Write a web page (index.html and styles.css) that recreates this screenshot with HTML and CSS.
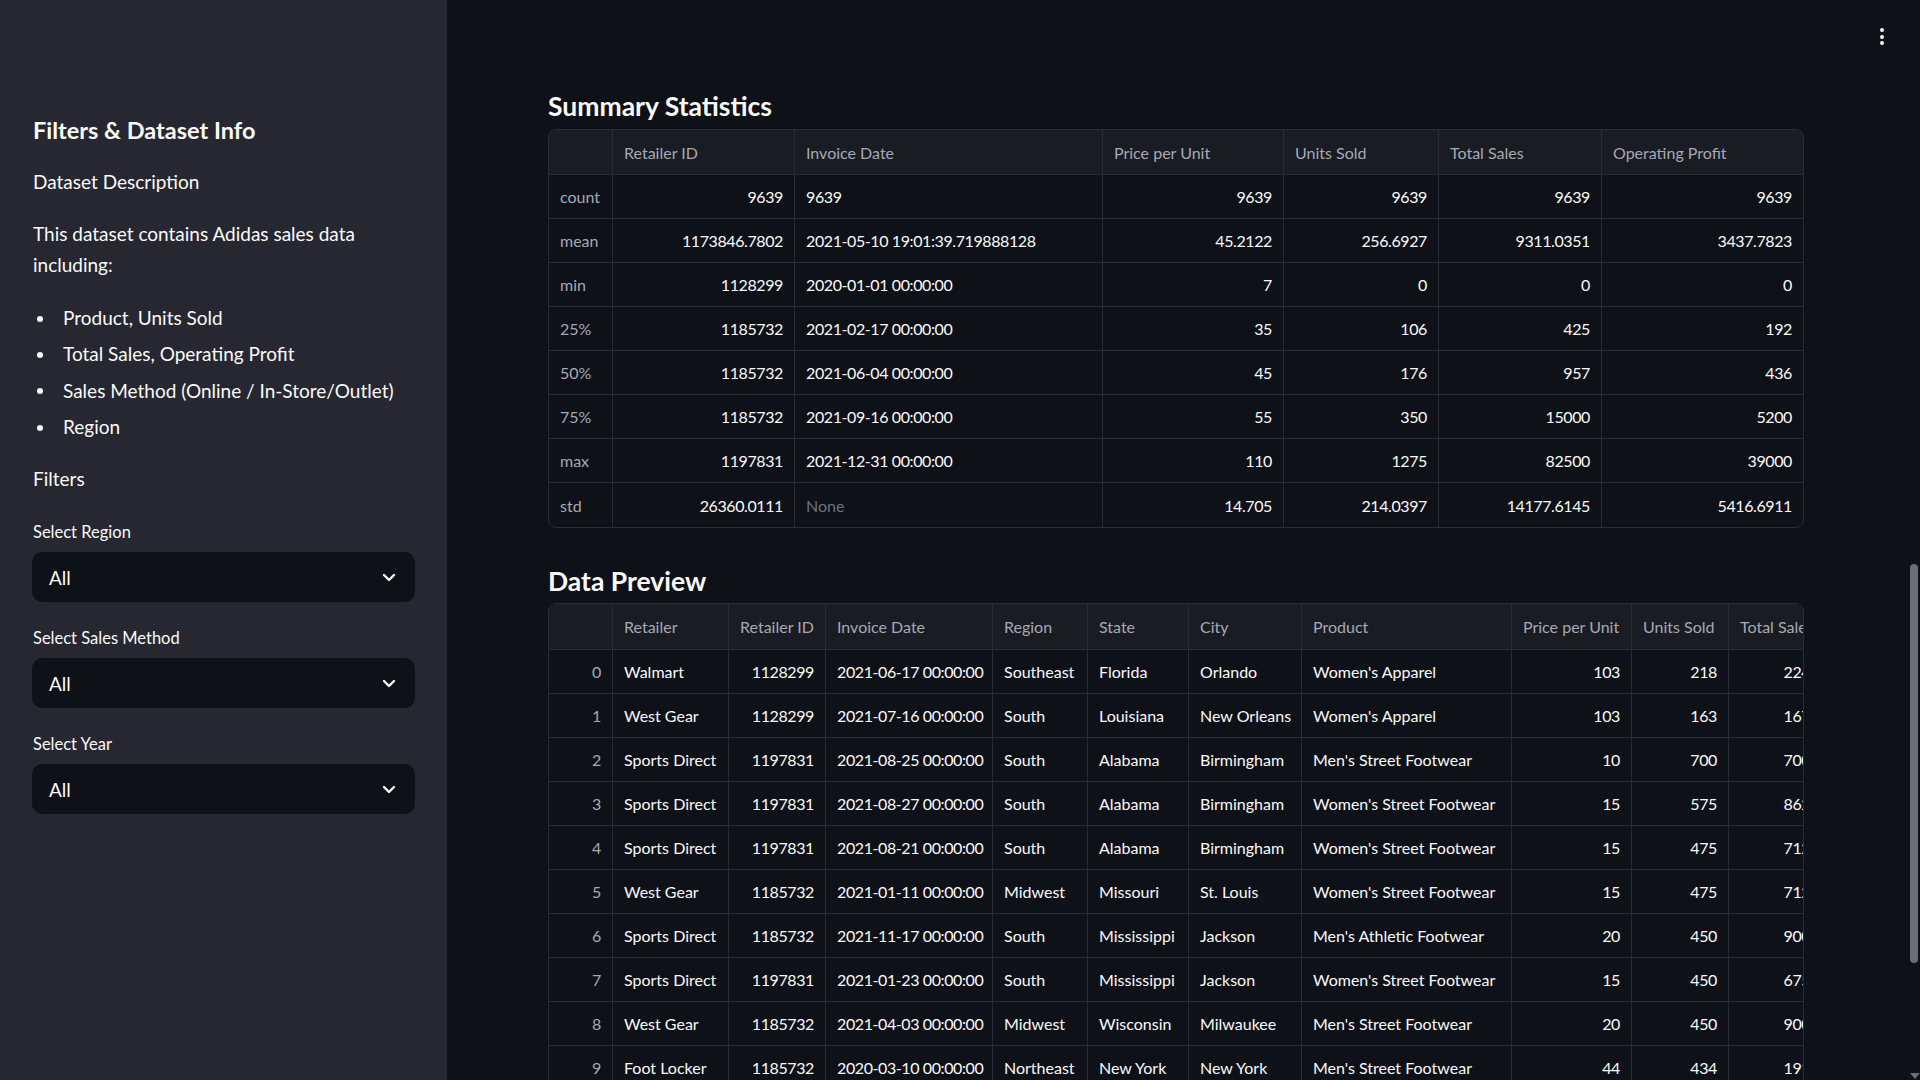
FILE: index.html
```html
<!DOCTYPE html>
<html lang="en">
<head>
<meta charset="utf-8">
<title>Adidas Sales</title>
<link rel="stylesheet" href="styles.css">
</head>
<body>
<div class="app">
  <aside class="sidebar">
    <h2 class="side-title">Filters &amp; Dataset Info</h2>
    <p class="side-sub">Dataset Description</p>
    <p class="side-para">This dataset contains Adidas sales data including:</p>
    <ul class="side-list">
      <li>Product, Units Sold</li>
      <li>Total Sales, Operating Profit</li>
      <li>Sales Method (Online / In-Store/Outlet)</li>
      <li>Region</li>
    </ul>
    <p class="side-sub filters">Filters</p>
    <div class="field">
      <label class="field-label">Select Region</label>
      <div class="select"><span>All</span><svg class="chev" width="14" height="9" viewBox="0 0 14 9"><path d="M2 2l5 5 5-5" fill="none" stroke="#fafafa" stroke-width="2.4" stroke-linecap="round" stroke-linejoin="round"/></svg></div>
    </div>
    <div class="field">
      <label class="field-label">Select Sales Method</label>
      <div class="select"><span>All</span><svg class="chev" width="14" height="9" viewBox="0 0 14 9"><path d="M2 2l5 5 5-5" fill="none" stroke="#fafafa" stroke-width="2.4" stroke-linecap="round" stroke-linejoin="round"/></svg></div>
    </div>
    <div class="field">
      <label class="field-label">Select Year</label>
      <div class="select"><span>All</span><svg class="chev" width="14" height="9" viewBox="0 0 14 9"><path d="M2 2l5 5 5-5" fill="none" stroke="#fafafa" stroke-width="2.4" stroke-linecap="round" stroke-linejoin="round"/></svg></div>
    </div>
  </aside>

  <main class="main">
    <h3 class="sec-title">Summary Statistics</h3>
    <div class="grid-wrap">
      <table class="grid stats">
        <colgroup>
          <col class="w64"><col class="w182"><col class="w308"><col class="w181"><col class="w155"><col class="w163"><col>
        </colgroup>
        <thead>
          <tr><th></th><th>Retailer ID</th><th>Invoice Date</th><th>Price per Unit</th><th>Units Sold</th><th>Total Sales</th><th>Operating Profit</th></tr>
        </thead>
        <tbody>
          <tr><td class="idx">count</td><td class="num">9639</td><td class="dt">9639</td><td class="num">9639</td><td class="num">9639</td><td class="num">9639</td><td class="num">9639</td></tr>
          <tr><td class="idx">mean</td><td class="num">1173846.7802</td><td class="dt">2021-05-10 19:01:39.719888128</td><td class="num">45.2122</td><td class="num">256.6927</td><td class="num">9311.0351</td><td class="num">3437.7823</td></tr>
          <tr><td class="idx">min</td><td class="num">1128299</td><td class="dt">2020-01-01 00:00:00</td><td class="num">7</td><td class="num">0</td><td class="num">0</td><td class="num">0</td></tr>
          <tr><td class="idx">25%</td><td class="num">1185732</td><td class="dt">2021-02-17 00:00:00</td><td class="num">35</td><td class="num">106</td><td class="num">425</td><td class="num">192</td></tr>
          <tr><td class="idx">50%</td><td class="num">1185732</td><td class="dt">2021-06-04 00:00:00</td><td class="num">45</td><td class="num">176</td><td class="num">957</td><td class="num">436</td></tr>
          <tr><td class="idx">75%</td><td class="num">1185732</td><td class="dt">2021-09-16 00:00:00</td><td class="num">55</td><td class="num">350</td><td class="num">15000</td><td class="num">5200</td></tr>
          <tr><td class="idx">max</td><td class="num">1197831</td><td class="dt">2021-12-31 00:00:00</td><td class="num">110</td><td class="num">1275</td><td class="num">82500</td><td class="num">39000</td></tr>
          <tr><td class="idx">std</td><td class="num">26360.0111</td><td class="none">None</td><td class="num">14.705</td><td class="num">214.0397</td><td class="num">14177.6145</td><td class="num">5416.6911</td></tr>
        </tbody>
      </table>
    </div>

    <h3 class="sec-title second">Data Preview</h3>
    <div class="grid-wrap tight">
      <table class="grid preview">
        <colgroup>
          <col class="w64"><col class="w116"><col class="w97"><col class="w167"><col class="w95"><col class="w101"><col class="w113"><col class="w210"><col class="w120"><col class="w97"><col class="w110">
        </colgroup>
        <thead>
          <tr><th></th><th>Retailer</th><th>Retailer ID</th><th>Invoice Date</th><th>Region</th><th>State</th><th>City</th><th>Product</th><th>Price per Unit</th><th>Units Sold</th><th>Total Sales</th></tr>
        </thead>
        <tbody>
          <tr><td class="idx num">0</td><td>Walmart</td><td class="num">1128299</td><td class="dt">2021-06-17 00:00:00</td><td>Southeast</td><td>Florida</td><td>Orlando</td><td>Women's Apparel</td><td class="num">103</td><td class="num">218</td><td class="num">22454</td></tr>
          <tr><td class="idx num">1</td><td>West Gear</td><td class="num">1128299</td><td class="dt">2021-07-16 00:00:00</td><td>South</td><td>Louisiana</td><td>New Orleans</td><td>Women's Apparel</td><td class="num">103</td><td class="num">163</td><td class="num">16789</td></tr>
          <tr><td class="idx num">2</td><td>Sports Direct</td><td class="num">1197831</td><td class="dt">2021-08-25 00:00:00</td><td>South</td><td>Alabama</td><td>Birmingham</td><td>Men's Street Footwear</td><td class="num">10</td><td class="num">700</td><td class="num">70000</td></tr>
          <tr><td class="idx num">3</td><td>Sports Direct</td><td class="num">1197831</td><td class="dt">2021-08-27 00:00:00</td><td>South</td><td>Alabama</td><td>Birmingham</td><td>Women's Street Footwear</td><td class="num">15</td><td class="num">575</td><td class="num">86250</td></tr>
          <tr><td class="idx num">4</td><td>Sports Direct</td><td class="num">1197831</td><td class="dt">2021-08-21 00:00:00</td><td>South</td><td>Alabama</td><td>Birmingham</td><td>Women's Street Footwear</td><td class="num">15</td><td class="num">475</td><td class="num">71250</td></tr>
          <tr><td class="idx num">5</td><td>West Gear</td><td class="num">1185732</td><td class="dt">2021-01-11 00:00:00</td><td>Midwest</td><td>Missouri</td><td>St. Louis</td><td>Women's Street Footwear</td><td class="num">15</td><td class="num">475</td><td class="num">71250</td></tr>
          <tr><td class="idx num">6</td><td>Sports Direct</td><td class="num">1185732</td><td class="dt">2021-11-17 00:00:00</td><td>South</td><td>Mississippi</td><td>Jackson</td><td>Men's Athletic Footwear</td><td class="num">20</td><td class="num">450</td><td class="num">90000</td></tr>
          <tr><td class="idx num">7</td><td>Sports Direct</td><td class="num">1197831</td><td class="dt">2021-01-23 00:00:00</td><td>South</td><td>Mississippi</td><td>Jackson</td><td>Women's Street Footwear</td><td class="num">15</td><td class="num">450</td><td class="num">67500</td></tr>
          <tr><td class="idx num">8</td><td>West Gear</td><td class="num">1185732</td><td class="dt">2021-04-03 00:00:00</td><td>Midwest</td><td>Wisconsin</td><td>Milwaukee</td><td>Men's Street Footwear</td><td class="num">20</td><td class="num">450</td><td class="num">90000</td></tr>
          <tr><td class="idx num">9</td><td>Foot Locker</td><td class="num">1185732</td><td class="dt">2020-03-10 00:00:00</td><td>Northeast</td><td>New York</td><td>New York</td><td>Men's Street Footwear</td><td class="num">44</td><td class="num">434</td><td class="num">19100</td></tr>
        </tbody>
      </table>
    </div>
  </main>
</div>

<div class="menu-btn" aria-label="Main menu"><span></span><span></span><span></span></div>
<div class="scroll-thumb"></div>
<div class="scroll-arrow"></div>
</body>
</html>
```

FILE: styles.css
```css
* { box-sizing: border-box; }

html, body {
  margin: 0;
  padding: 0;
  height: 100%;
  overflow: hidden;
  background: #0e1117;
  color: #fafafa;
  font-family: Lato, "Noto Sans", "Liberation Sans", sans-serif;
}

.app {
  display: flex;
  height: 100vh;
}

/* ---------- Sidebar ---------- */
.sidebar {
  width: 447px;
  flex: 0 0 447px;
  background: #262730;
  padding: 114px 32px 0 33px;
}

.side-title {
  margin: 0;
  font-size: 23.5px;
  line-height: 32px;
  font-weight: 700;
  color: #fafafa;
}

.side-sub {
  margin: 22px 0 0;
  font-size: 19px;
  line-height: 28px;
}

.side-para {
  margin: 22px 0 0;
  font-size: 19px;
  line-height: 31px;
}

.side-list {
  margin: 20px 0 0;
  padding: 0;
  list-style: none;
  font-size: 19px;
  line-height: 36.3px;
}

.side-list li {
  display: flex;
  align-items: center;
}

.side-list li::before {
  content: "";
  flex: 0 0 6px;
  width: 6px;
  height: 6px;
  margin: 1px 20px 0 4px;
  border-radius: 50%;
  background: #fafafa;
}

.side-sub.filters {
  margin-top: 20px;
}

.field {
  margin-top: 27px;
}

.field + .field {
  margin-top: 23.8px;
}

.field-label {
  display: block;
  font-size: 16.5px;
  line-height: 24px;
  color: #fafafa;
}

.select {
  margin-top: 8.2px;
  margin-left: -1px;
  height: 50px;
  width: 383px;
  background: #0e1117;
  border-radius: 10px;
  display: flex;
  align-items: center;
  justify-content: space-between;
  padding: 0 19px 0 17px;
  font-size: 19px;
}

.chev {
  display: block;
}

/* ---------- Main ---------- */
.main {
  flex: 1;
  padding: 88px 0 0 101px;
  min-width: 0;
}

.sec-title {
  margin: 0;
  font-size: 26.5px;
  line-height: 36px;
  font-weight: 700;
  color: #fafafa;
}

.sec-title.second {
  margin-top: 35px;
}

.grid-wrap {
  margin-top: 5px;
  width: 1256px;
  border: 1px solid #2a2c35;
  border-radius: 8px;
  overflow: hidden;
}

.grid-wrap.tight {
  margin-top: 4px;
}

.grid {
  border-collapse: separate;
  border-spacing: 0;
  table-layout: fixed;
  font-size: 16px;
}

.grid.stats { width: 100%; }
.grid.preview { width: 1290px; }

.grid th,
.grid td {
  padding: 0 11px;
  border-right: 1px solid #2a2c35;
  border-bottom: 1px solid #2a2c35;
  white-space: nowrap;
  overflow: hidden;
  vertical-align: middle;
  text-align: left;
}

.grid th {
  height: 45px;
  background: #1a1c24;
  color: #a6a9b3;
  font-weight: 400;
}

.grid.preview th {
  height: 46px;
}

.grid td {
  height: 44px;
  color: #fafafa;
}

.grid tr > :last-child { border-right: none; }
.grid.stats tbody tr:last-child td { border-bottom: none; }

.grid td.num { text-align: right; letter-spacing: -0.4px; }
.grid td.dt { letter-spacing: -0.4px; }
.grid td.idx { color: #a6a9b3; }
.grid td.none { color: #6f727b; }

.w64 { width: 64px; }
.w97 { width: 97px; }
.w95 { width: 95px; }
.w101 { width: 101px; }
.w110 { width: 110px; }
.w113 { width: 113px; }
.w116 { width: 116px; }
.w120 { width: 120px; }
.w155 { width: 155px; }
.w163 { width: 163px; }
.w167 { width: 167px; }
.w181 { width: 181px; }
.w182 { width: 182px; }
.w210 { width: 210px; }
.w308 { width: 308px; }

/* ---------- Overlays ---------- */
.menu-btn {
  position: absolute;
  top: 28px;
  left: 1880px;
  display: flex;
  flex-direction: column;
  gap: 2.6px;
}

.menu-btn span {
  width: 4px;
  height: 4px;
  border-radius: 50%;
  background: #fafafa;
}

.scroll-thumb {
  position: absolute;
  left: 1910px;
  top: 564px;
  width: 8px;
  height: 399px;
  border-radius: 4px;
  background: #6b6d72;
}

.scroll-arrow {
  position: absolute;
  left: 1910px;
  top: 1073px;
  width: 0;
  height: 0;
  border-left: 5px solid transparent;
  border-right: 5px solid transparent;
  border-top: 6px solid #6b6d72;
}
```
